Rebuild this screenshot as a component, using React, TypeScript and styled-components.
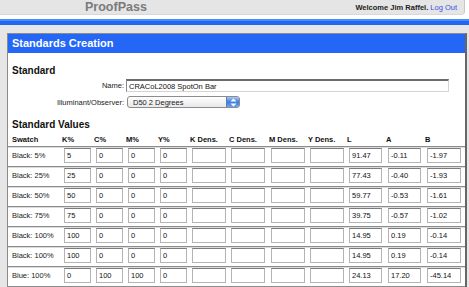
import React from "react";
import styled, { createGlobalStyle } from "styled-components";

const GlobalStyle = createGlobalStyle`
  html, body {
    margin: 0;
    padding: 0;
    background: #e6e6e6;
    font-family: "Liberation Sans", Arial, sans-serif;
    overflow: hidden;
  }
`;

interface Row {
  swatch: string;
  k: string;
  c: string;
  m: string;
  y: string;
  l: string;
  a: string;
  b: string;
}

const rows: Row[] = [
  { swatch: "Black: 5%", k: "5", c: "0", m: "0", y: "0", l: "91.47", a: "-0.11", b: "-1.97" },
  { swatch: "Black: 25%", k: "25", c: "0", m: "0", y: "0", l: "77.43", a: "-0.40", b: "-1.93" },
  { swatch: "Black: 50%", k: "50", c: "0", m: "0", y: "0", l: "59.77", a: "-0.53", b: "-1.61" },
  { swatch: "Black: 75%", k: "75", c: "0", m: "0", y: "0", l: "39.75", a: "-0.57", b: "-1.02" },
  { swatch: "Black: 100%", k: "100", c: "0", m: "0", y: "0", l: "14.95", a: "0.19", b: "-0.14" },
  { swatch: "Black: 100%", k: "100", c: "0", m: "0", y: "0", l: "14.95", a: "0.19", b: "-0.14" },
  { swatch: "Blue: 100%", k: "0", c: "100", m: "100", y: "0", l: "24.13", a: "17.20", b: "-45.14" },
];

const headers = ["Swatch", "K%", "C%", "M%", "Y%", "K Dens.", "C Dens.", "M Dens.", "Y Dens.", "L", "A", "B"];

const App = () => {
  return (
    <Page>
      <GlobalStyle />
      <TopWrap>
        <TopBar>
          <Brand>ProofPass</Brand>
          <UserBox>
            Welcome Jim Raffel. <LogOut href="#">Log Out</LogOut>
          </UserBox>
        </TopBar>
      </TopWrap>
      <BlueStrip />
      <Content>
        <Panel>
          <PanelTitle>Standards Creation</PanelTitle>
          <PanelBody>
            <SectionTitle>Standard</SectionTitle>
            <Form>
              <Label>Name:</Label>
              <NameField defaultValue="CRACoL2008 SpotOn Bar" />
              <Label>Illuminant/Observer:</Label>
              <Select>
                <SelectText>D50 2 Degrees</SelectText>
                <SelectButton>
                  <svg width="7" height="9" viewBox="0 0 7 9">
                    <path d="M3.5 0.5 L6.5 3.5 L0.5 3.5 Z" fill="#fff" />
                    <path d="M3.5 8.5 L6.5 5.5 L0.5 5.5 Z" fill="#fff" />
                  </svg>
                </SelectButton>
              </Select>
            </Form>
            <SectionTitle $gap={10}>Standard Values</SectionTitle>
            <HeadRow>
              {headers.map((h, i) => (
                <HeadCell key={i}>{h}</HeadCell>
              ))}
            </HeadRow>
            {rows.map((r, idx) => (
              <DataRow key={idx}>
                <Swatch>{r.swatch}</Swatch>
                <Cell $w={27} defaultValue={r.k} />
                <Cell $w={27} defaultValue={r.c} />
                <Cell $w={27} defaultValue={r.m} />
                <Cell $w={27} defaultValue={r.y} />
                <Cell $w={34} defaultValue="" />
                <Cell $w={34} defaultValue="" />
                <Cell $w={34} defaultValue="" />
                <Cell $w={34} defaultValue="" />
                <Cell $w={33} defaultValue={r.l} />
                <Cell $w={33} defaultValue={r.a} />
                <Cell $w={34} defaultValue={r.b} />
              </DataRow>
            ))}
            <DataRow>
              <Swatch />
              <Cell $w={27} defaultValue="" />
              <Cell $w={27} defaultValue="" />
              <Cell $w={27} defaultValue="" />
              <Cell $w={27} defaultValue="" />
              <Cell $w={34} defaultValue="" />
              <Cell $w={34} defaultValue="" />
              <Cell $w={34} defaultValue="" />
              <Cell $w={34} defaultValue="" />
              <Cell $w={33} defaultValue="" />
              <Cell $w={33} defaultValue="" />
              <Cell $w={34} defaultValue="" />
            </DataRow>
          </PanelBody>
        </Panel>
      </Content>
    </Page>
  );
};

export default App;

const Page = styled.div`
  width: 469px;
  height: 287px;
  overflow: hidden;
`;

const TopWrap = styled.div`
  background: #fff;
  padding-bottom: 4px;
`;

const TopBar = styled.div`
  height: 15px;
  margin-right: 4px;
  display: flex;
  align-items: center;
  justify-content: space-between;
  padding: 0 7px 0 85px;
  background: #e5e5e5;
  border-right: 1px solid #c8c8c8;
  border-bottom: 1px solid #d8d8d8;
  border-bottom-right-radius: 4px;
  box-sizing: border-box;
`;

const Brand = styled.div`
  font-size: 12.5px;
  font-weight: bold;
  color: #7a7a7a;
  line-height: 15px;
`;

const UserBox = styled.div`
  font-size: 7.5px;
  font-weight: bold;
  color: #222;
  white-space: pre;
`;

const LogOut = styled.a`
  font-weight: normal;
  color: #3a4ee8;
  text-decoration: none;
`;

const BlueStrip = styled.div`
  height: 6px;
  background: linear-gradient(#4d8cf8 0, #4d8cf8 2px, #2466f4 2px);
`;

const Content = styled.div`
  padding: 8px 2px 0 7px;
`;

const Panel = styled.div`
  border-top: 1px solid #8a8a8a;
  border-left: 1px solid #8a8a8a;
  border-right: 2px solid #666;
  background: #fff;
  height: 260px;
  overflow: hidden;
`;

const PanelTitle = styled.div`
  background: #2466f6;
  height: 19px;
  line-height: 19px;
  padding-left: 4px;
  color: #fff;
  font-size: 11px;
  font-weight: bold;
`;

const PanelBody = styled.div`
  padding-top: 11px;
`;

const SectionTitle = styled.div<{ $gap?: number }>`
  margin-top: ${(p) => p.$gap || 0}px;
  padding-left: 4px;
  font-size: 10px;
  font-weight: bold;
  line-height: 14px;
  color: #111;
`;

const Form = styled.div`
  margin-top: 1px;
  display: grid;
  grid-template-columns: 118px auto;
  row-gap: 4px;
  align-items: center;
  justify-items: start;
`;

const Label = styled.div`
  justify-self: end;
  padding-right: 2px;
  font-size: 7.5px;
  color: #222;
`;

const NameField = styled.input`
  width: 323px;
  height: 13px;
  box-sizing: border-box;
  padding: 0 0 0 2px;
  border: 1px solid #d4d4d4;
  border-top: 2px solid #6a6a6a;
  border-left-color: #8a8a8a;
  font-family: inherit;
  font-size: 7.5px;
  color: #111;
  outline: none;
`;

const Select = styled.div`
  margin-left: 1px;
  width: 113px;
  height: 12px;
  box-sizing: border-box;
  display: flex;
  align-items: center;
  border: 1px solid #8c8c8c;
  border-radius: 3px;
  background: linear-gradient(#ffffff, #e8e8e8);
  overflow: hidden;
`;

const SelectText = styled.span`
  flex: 1;
  padding-left: 5px;
  font-size: 7.5px;
  color: #222;
`;

const SelectButton = styled.span`
  width: 12px;
  height: 100%;
  display: flex;
  align-items: center;
  justify-content: center;
  background: linear-gradient(#a9c9f5, #3c7be0 50%, #6ea3f0);
  border-left: 1px solid #5b7fb8;
`;

const columns = "56px repeat(4, 32px) 39px 40px 39px 39px 39px 39px 34px";

const HeadRow = styled.div`
  display: grid;
  grid-template-columns: ${columns};
  height: 14px;
  align-items: center;
`;

const HeadCell = styled.div`
  font-size: 7.5px;
  font-weight: bold;
  color: #111;
  margin-left: -2px;
  &:first-child {
    margin-left: 0;
    padding-left: 4px;
  }
`;

const DataRow = styled.div`
  display: grid;
  grid-template-columns: ${columns};
  height: 20px;
  box-sizing: border-box;
  align-items: center;
  border-top: 1px solid #8c8c8c;
  box-shadow: inset 0 1px 0 #dcdcdc;
  padding: 0 0 2px;
`;

const Swatch = styled.div`
  padding-left: 4px;
  font-size: 7.5px;
  color: #222;
`;

const Cell = styled.input<{ $w: number }>`
  width: ${(p) => p.$w}px;
  height: 15px;
  box-sizing: border-box;
  padding: 0 0 0 2px;
  border: 1px solid #b4b4b4;
  border-top-color: #7c7c7c;
  font-family: inherit;
  font-size: 7.5px;
  color: #111;
  outline: none;
`;
